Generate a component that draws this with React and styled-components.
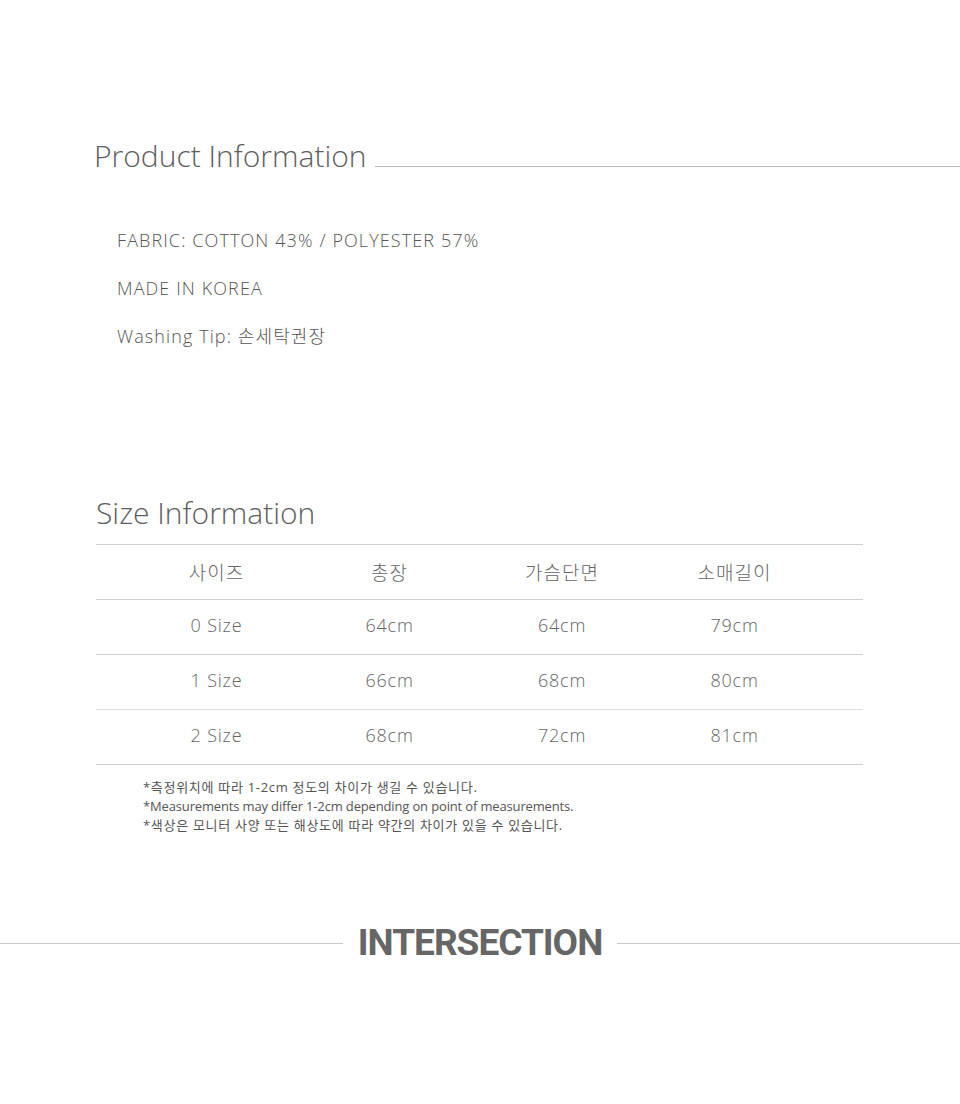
import React from 'react';
import styled, { createGlobalStyle } from 'styled-components';

const GlobalStyle = createGlobalStyle`
  html, body {
    margin: 0;
    padding: 0;
    background: #ffffff;
  }
  body {
    font-family: "Open Sans", "Noto Sans CJK KR", sans-serif;
    color: #666666;
  }
`;

const Page = styled.div`
  width: 960px;
  height: 1104px;
  overflow: hidden;
`;

const Section = styled.section`
  padding-top: ${props => props.top}px;
`;

const TitleRow = styled.div`
  display: flex;
  align-items: flex-end;
  padding-left: ${props => props.indent}px;
  gap: 8px;
`;

const Title = styled.h2`
  margin: 0;
  font-size: 30px;
  font-weight: 300;
  line-height: 40px;
  color: #5e5e5e;
  white-space: nowrap;
`;

const TitleRule = styled.div`
  flex: 1;
  height: 1px;
  background: #b8b8b8;
  margin-bottom: 9px;
`;

const InfoList = styled.ul`
  list-style: none;
  margin: 0;
  padding: 0 0 0 117px;
  margin-top: 40px;
`;

const InfoItem = styled.li`
  font-size: 18px;
  font-weight: 300;
  line-height: 48px;
  color: #555555;
  letter-spacing: 1.1px;
`;

const Table = styled.div`
  margin: 11px 97px 0 96px;
  border-top: 1px solid #cfcfcf;
`;

const Row = styled.div`
  display: grid;
  grid-template-columns: 173px 173px 172px 173px;
  padding-left: 34px;
  height: 54px;
  align-items: center;
  border-bottom: 1px solid ${props => (props.light ? '#dedede' : '#cfcfcf')};
`;

const Cell = styled.div`
  text-align: center;
  font-size: ${props => (props.head ? 19 : 18)}px;
  font-weight: 300;
  color: #666666;
  letter-spacing: ${props => (props.head ? 1 : 0.8)}px;
  margin-top: ${props => (props.head ? 0 : -4)}px;
`;

const Notes = styled.div`
  padding: 13px 0 0 143px;
`;

const Note = styled.p`
  margin: 0;
  font-size: 13px;
  line-height: 19px;
  color: #555555;
  letter-spacing: ${props => (props.latin ? -0.15 : 0.7)}px;
`;

const Brand = styled.div`
  display: flex;
  align-items: center;
  margin-top: 88px;
  gap: 15px;
`;

const BrandRule = styled.div`
  flex: 1;
  height: 1px;
  background: #c8c8c8;
`;

const BrandName = styled.div`
  font-family: Roboto, "Liberation Sans", sans-serif;
  font-weight: 700;
  font-size: 37px;
  letter-spacing: -1px;
  color: #666666;
  line-height: 40px;
`;

const rows = [
  ['0 Size', '64cm', '64cm', '79cm'],
  ['1 Size', '66cm', '68cm', '80cm'],
  ['2 Size', '68cm', '72cm', '81cm'],
];

export default function App() {
  return (
    <Page>
      <GlobalStyle />
      <Section top={136}>
        <TitleRow indent={94}>
          <Title>Product Information</Title>
          <TitleRule />
        </TitleRow>
        <InfoList>
          <InfoItem>FABRIC: COTTON 43% / POLYESTER 57%</InfoItem>
          <InfoItem>MADE IN KOREA</InfoItem>
          <InfoItem>Washing Tip: 손세탁권장</InfoItem>
        </InfoList>
      </Section>

      <Section top={133}>
        <TitleRow indent={96}>
          <Title>Size Information</Title>
        </TitleRow>
        <Table>
          <Row>
            <Cell head>사이즈</Cell>
            <Cell head>총장</Cell>
            <Cell head>가슴단면</Cell>
            <Cell head>소매길이</Cell>
          </Row>
          {rows.map((r, i) => (
            <Row key={r[0]} light={i === 1}>
              {r.map(c => (
                <Cell key={c}>{c}</Cell>
              ))}
            </Row>
          ))}
        </Table>
        <Notes>
          <Note>*측정위치에 따라 1-2cm 정도의 차이가 생길 수 있습니다.</Note>
          <Note latin>*Measurements may differ 1-2cm depending on point of measurements.</Note>
          <Note>*색상은 모니터 사양 또는 해상도에 따라 약간의 차이가 있을 수 있습니다.</Note>
        </Notes>
      </Section>

      <Brand>
        <BrandRule />
        <BrandName>INTERSECTION</BrandName>
        <BrandRule />
      </Brand>
    </Page>
  );
}
